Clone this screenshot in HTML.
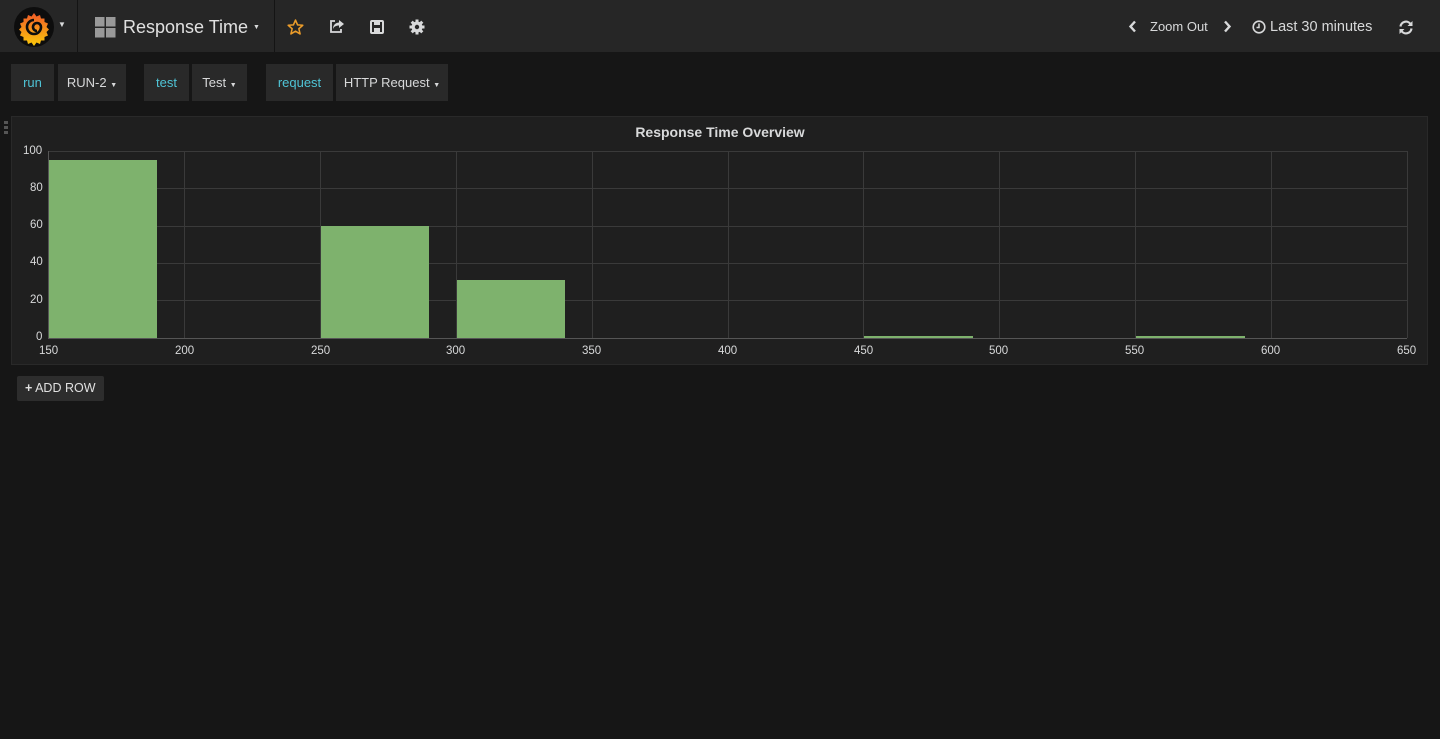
<!DOCTYPE html>
<html><head><meta charset="utf-8"><style>
*{box-sizing:border-box;margin:0;padding:0}
body{width:1440px;height:739px;background:#161616;font-family:"Liberation Sans",sans-serif;color:#d8d9da;position:relative;overflow:hidden}
.nav{position:absolute;left:0;top:0;width:1440px;height:52px;background:#262626}
.sep{position:absolute;top:0;width:1px;height:52px;background:#141414}
.t{position:absolute;white-space:nowrap}
.btn{position:absolute;top:64px;height:37px;background:#292929;font-size:13px;line-height:37px;text-align:center}
.cy{color:#4fc4d6}
.panel{position:absolute;left:11px;top:116px;width:1417px;height:249px;background:#1f1f1f;border:1px solid #292929}
.ax{font-size:11.5px;color:#d8d9da;position:absolute}
</style></head><body>
<div class="nav">
  <svg style="position:absolute;left:14px;top:7px" width="40" height="40" viewBox="0 0 40 40"><circle cx="20" cy="20" r="20" fill="#0d0d0d"/>
  <defs><linearGradient id="g" x1="0" y1="1" x2="0" y2="0"><stop offset="0" stop-color="#fbca0a"/><stop offset="1" stop-color="#f05a28"/></linearGradient></defs>
  <path d="M20 6 l2.5 3.5 3.5-1.5 1 3.5 3.5 0 0 3.5 3.5 1.5-1.5 3.5 2.5 2.5-2.5 2.5 1.5 3.5-3.5 1.5 0 3.5-3.5 0-1 3.5-3.5-1.5-2.5 3.5-2.5-3.5-3.5 1.5-1-3.5-3.5 0 0-3.5-3.5-1.5 1.5-3.5-2.5-2.5 2.5-2.5-1.5-3.5 3.5-1.5 0-3.5 3.5 0 1-3.5 3.5 1.5z" fill="url(#g)"/>
  <path d="M20 13 a7 7 0 1 0 7 7 a4 4 0 1 0 -4 4" fill="none" stroke="#0d0d0d" stroke-width="2.6"/></svg>
  <div class="t" style="left:58px;top:20px;font-size:8px">▼</div>
  <div class="sep" style="left:77px"></div>
  <svg style="position:absolute;left:95px;top:17px" width="21" height="21"><rect x="0" y="0" width="9.5" height="9.5" fill="#999"/><rect x="11" y="0" width="9.5" height="9.5" fill="#999"/><rect x="0" y="11" width="9.5" height="9.5" fill="#999"/><rect x="11" y="11" width="9.5" height="9.5" fill="#999"/></svg>
  <div class="t" style="left:123px;top:17px;font-size:18px;color:#e0e0e0">Response Time</div>
  <div class="t" style="left:253px;top:24px;font-size:7px">▼</div>
  <div class="sep" style="left:274px"></div>
  <svg style="position:absolute;left:287px;top:19px" width="17" height="16" viewBox="0 0 24 23"><path d="M12 1.5 L15 8.5 L22.5 9 L16.8 14 L18.6 21.5 L12 17.5 L5.4 21.5 L7.2 14 L1.5 9 L9 8.5Z" fill="none" stroke="#eb9c2a" stroke-width="2.2" stroke-linejoin="round"/></svg>
  <svg style="position:absolute;left:329px;top:19px" width="16" height="15" viewBox="0 0 16 15"><path d="M10 1 L15 5 L10 9 V6.5 C7 6.5 5 7.5 4 10 C4 6 6 4 10 3.5Z" fill="#d8d9da"/><path d="M6 2 H2 V13 H12 V10" fill="none" stroke="#d8d9da" stroke-width="1.8"/></svg>
  <svg style="position:absolute;left:370px;top:20px" width="14" height="14"><rect x="1" y="1" width="12" height="12" rx="1" fill="none" stroke="#d8d9da" stroke-width="2"/><rect x="4" y="1" width="6" height="4" fill="#d8d9da"/><rect x="4" y="8" width="6" height="4" fill="#d8d9da"/></svg>
  <svg style="position:absolute;left:409px;top:19px" width="16" height="16" viewBox="0 0 16 16"><g fill="#d8d9da"><circle cx="8" cy="8" r="5.5"/><rect x="6.5" y="0.5" width="3" height="15"/><rect x="0.5" y="6.5" width="15" height="3"/><rect x="6.5" y="0.5" width="3" height="15" transform="rotate(45 8 8)"/><rect x="6.5" y="0.5" width="3" height="15" transform="rotate(-45 8 8)"/></g><circle cx="8" cy="8" r="2.2" fill="#262626"/></svg>
  <svg style="position:absolute;left:1128px;top:20px" width="9" height="13"><path d="M7 1.5 L2.5 6.5 L7 11.5" fill="none" stroke="#d8d9da" stroke-width="2.4"/></svg>
  <div class="t" style="left:1150px;top:19px;font-size:13px">Zoom Out</div>
  <svg style="position:absolute;left:1223px;top:20px" width="9" height="13"><path d="M2 1.5 L6.5 6.5 L2 11.5" fill="none" stroke="#d8d9da" stroke-width="2.4"/></svg>
  <svg style="position:absolute;left:1252px;top:20px" width="14" height="14"><circle cx="7" cy="7" r="5.8" fill="none" stroke="#d8d9da" stroke-width="1.6"/><path d="M7 3.5V7.5H4.5" fill="none" stroke="#d8d9da" stroke-width="1.5"/></svg>
  <div class="t" style="left:1270px;top:19px;font-size:14.5px">Last 30 minutes</div>
  <svg style="position:absolute;left:1398px;top:20px" width="16" height="15" viewBox="0 0 16 15"><path d="M2.5 6.5 A5.5 5.5 0 0 1 12.5 4" fill="none" stroke="#d8d9da" stroke-width="2.2"/><path d="M14.5 1 V6 H9.5Z" fill="#d8d9da"/><path d="M13.5 8.5 A5.5 5.5 0 0 1 3.5 11" fill="none" stroke="#d8d9da" stroke-width="2.2"/><path d="M1.5 14 V9 H6.5Z" fill="#d8d9da"/></svg>
</div>
<div class="btn cy" style="left:11px;width:43px">run</div>
<div class="btn" style="left:58px;width:68px">RUN-2 <span style="font-size:7px">▼</span></div>
<div class="btn cy" style="left:144px;width:45px">test</div>
<div class="btn" style="left:192px;width:55px">Test <span style="font-size:7px">▼</span></div>
<div class="btn cy" style="left:266px;width:67px">request</div>
<div class="btn" style="left:336px;width:112px">HTTP Request <span style="font-size:7px">▼</span></div>
<div style="position:absolute;left:4px;top:121px;width:4px;height:14px;background:repeating-linear-gradient(#555 0 3px,transparent 3px 5px)"></div>
<div class="panel"></div>
<div class="t" style="left:0;width:1440px;text-align:center;top:124px;font-size:14px;font-weight:bold;color:#d8d9da">Response Time Overview</div>
<svg style="position:absolute;left:0;top:0" width="1440" height="739">
 <g stroke="#3a3a3a" stroke-width="1">
  <line x1="49" y1="151.5" x2="1407" y2="151.5"/><line x1="49" y1="188.5" x2="1407" y2="188.5"/><line x1="49" y1="226.5" x2="1407" y2="226.5"/><line x1="49" y1="263.5" x2="1407" y2="263.5"/><line x1="49" y1="300.5" x2="1407" y2="300.5"/>
  <line x1="184.5" y1="151" x2="184.5" y2="338"/><line x1="320.5" y1="151" x2="320.5" y2="338"/><line x1="456.5" y1="151" x2="456.5" y2="338"/><line x1="592.5" y1="151" x2="592.5" y2="338"/><line x1="728.5" y1="151" x2="728.5" y2="338"/><line x1="863.5" y1="151" x2="863.5" y2="338"/><line x1="999.5" y1="151" x2="999.5" y2="338"/><line x1="1135.5" y1="151" x2="1135.5" y2="338"/><line x1="1271.5" y1="151" x2="1271.5" y2="338"/><line x1="1407.5" y1="151" x2="1407.5" y2="338"/>
  <line x1="48.5" y1="151" x2="48.5" y2="338" stroke="#555"/>
 </g>
 <g fill="#7eb26d">
  <rect x="49" y="160" width="108" height="178"/><rect x="321" y="226" width="108" height="112"/><rect x="457" y="280" width="108" height="58"/><rect x="864" y="336" width="109" height="2"/><rect x="1136" y="336" width="109" height="2"/>
 </g>
 <line x1="48" y1="338.5" x2="1407" y2="338.5" stroke="#555"/>
</svg>
<div class="ax" style="left:23px;top:145px">100</div><div class="ax" style="left:30px;top:182px">80</div><div class="ax" style="left:30px;top:219px">60</div><div class="ax" style="left:30px;top:256px">40</div><div class="ax" style="left:30px;top:294px">20</div><div class="ax" style="left:36px;top:331px">0</div>
<div class="ax" style="left:39px;top:345px">150</div><div class="ax" style="left:175px;top:345px">200</div><div class="ax" style="left:311px;top:345px">250</div><div class="ax" style="left:446px;top:345px">300</div><div class="ax" style="left:582px;top:345px">350</div><div class="ax" style="left:718px;top:345px">400</div><div class="ax" style="left:854px;top:345px">450</div><div class="ax" style="left:989px;top:345px">500</div><div class="ax" style="left:1125px;top:345px">550</div><div class="ax" style="left:1261px;top:345px">600</div><div class="ax" style="left:1397px;top:345px">650</div>
<div style="position:absolute;left:17px;top:376px;width:87px;height:25px;background:#2d2d2d;border-radius:2px;font-size:12.5px;line-height:25px;padding-left:8px;color:#e0e0e0"><b>+</b> ADD ROW</div>
</body></html>
